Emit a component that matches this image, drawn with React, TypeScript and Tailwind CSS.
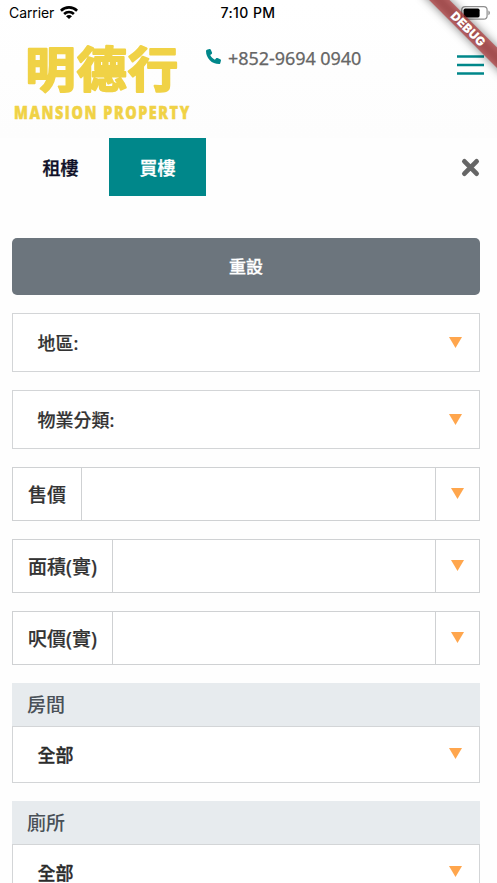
import type { ReactNode } from "react";
import { FaPhone } from "react-icons/fa6";

const FONT = "font-['Noto_Sans','Noto_Sans_CJK_TC',sans-serif]";

function StatusBar() {
  return (
    <div className="flex h-[26px] items-center px-[9px] font-['Inter',sans-serif] text-[14px] leading-none text-black">
      <div className="flex flex-1 items-center gap-[6px]">
        <span className="-tracking-[0.1px]">Carrier</span>
        <svg width="18" height="13" viewBox="0 0 18 13" fill="none" stroke="#000" strokeWidth="2.6" className="-mt-px">
          <path d="M.9 4.700C5.400 .3 12.600 .3 17.100 4.700" />
          <path d="M4.100 8C6.900 5.300 11.100 5.300 13.900 8" />
          <path d="M9 13 6 10.200C7.700 8.700 10.300 8.700 12 10.200Z" fill="#000" stroke="none" />
        </svg>
      </div>
      <span className="-ml-[1px] font-medium tracking-[0.4px]">7:10 PM</span>
      <div className="flex flex-1 justify-end">
        <svg width="30" height="14" viewBox="0 0 30 14" className="-mt-px -mr-[3px]">
          <rect x=".7" y=".7" width="25.4" height="12.4" rx="3.4" fill="none" stroke="#8e8e8e" strokeWidth="1.2" />
          <rect x="2.6" y="2.6" width="16" height="8.8" rx="1.6" fill="#000" />
          <path d="M27.4 4.6c2 .8 2 3.8 0 4.600Z" fill="#8e8e8e" />
        </svg>
      </div>
    </div>
  );
}

function DebugRibbon() {
  return (
    <svg className="pointer-events-none absolute top-0 right-0 z-10" width="97" height="97" viewBox="0 0 97 97">
      <defs>
        <filter id="ribbonShadow" x="-30%" y="-200%" width="160%" height="500%">
          <feGaussianBlur stdDeviation="4.7" />
        </filter>
      </defs>
      <g transform="translate(97 0) rotate(45)">
        <rect x="-60" y="33.6" width="120" height="14.4" fill="#000" fillOpacity=".5" filter="url(#ribbonShadow)" />
        <rect x="-60" y="33.6" width="120" height="14.4" fill="#b02a2c" fillOpacity=".63" />
        <text
          x="0"
          y="45.2"
          textAnchor="middle"
          textLength="43"
          fill="#fff"
          className="font-['Inter',sans-serif] text-[12.2px] font-black"
        >
          DEBUG
        </text>
      </g>
    </svg>
  );
}

function Logo() {
  return (
    <svg
      width="180"
      height="84"
      viewBox="0 0 180 84"
      fill="#f0d246"
      stroke="#f0d246"
      strokeLinejoin="round"
      className="overflow-visible"
    >
      <text
        transform="translate(14.5 48.5) scale(1 .95)"
        strokeWidth="2.2"
        textLength="152.5"
        className="font-['Noto_Sans_CJK_TC',sans-serif] text-[50px] leading-none font-bold"
      >
        明德行
      </text>
      <text
        transform="translate(3 81) scale(.8 1)"
        strokeWidth=".5"
        textLength="219"
        className="font-['Open_Sans',sans-serif] text-[18px] leading-none font-extrabold"
      >
        MANSION PROPERTY
      </text>
    </svg>
  );
}

function Header() {
  return (
    <header className="flex h-[112px] items-start pt-[12px] pr-[13px] pl-[11px]">
      <Logo />
      <div className="flex flex-1 items-center gap-[7px] pt-[6px] pl-[15px]">
        <FaPhone className="-mt-[4px] size-[15px] shrink-0 text-[#00878a]" />
        <span className="text-[18px] leading-[28px] tracking-[-0.06px] whitespace-nowrap text-[#666] [-webkit-text-stroke:0.25px]">
          +852-9694 0940
        </span>
      </div>
      <button className="mt-[17px]" aria-label="選單">
        <svg width="27" height="20" viewBox="0 0 27 20" stroke="#00878a" strokeWidth="2.3">
          <path d="M0 1.500H27M0 10H27M0 18.500H27" />
        </svg>
      </button>
    </header>
  );
}

function Tabs() {
  return (
    <div className="flex h-[57.5px] items-center pr-[17px] pl-[12px] text-[18px] font-medium [-webkit-text-stroke:0.35px]">
      <button className="h-full w-[97px] pt-[3px] text-[#101028]">租樓</button>
      <button className="h-full w-[97px] bg-[#00878a] pt-[3px] text-white">買樓</button>
      <button className="mt-[2px] ml-auto" aria-label="關閉">
        <svg width="19" height="19" viewBox="0 0 19 19" stroke="#666" strokeWidth="4.8" strokeLinecap="round">
          <path d="M3.400 3.400 15.600 15.600M15.600 3.400 3.400 15.600" />
        </svg>
      </button>
    </div>
  );
}

function Arrow() {
  return (
    <svg width="13" height="11" viewBox="0 0 13 11" fill="#ffa64d">
      <path d="M0 0H13L6.500 11Z" />
    </svg>
  );
}

function SelectBox({ children }: { children: ReactNode }) {
  return (
    <div className="flex h-[59px] items-center justify-between border border-[#d3d5d7] bg-white pr-[17px] pl-[24.5px] text-[18px] font-medium text-[#333] [-webkit-text-stroke:0.2px]">
      <span className="pt-[2px]">{children}</span>
      <Arrow />
    </div>
  );
}

function RangeInput({ label, width }: { label: string; width: string }) {
  return (
    <div className="flex h-[54px] border border-[#cfd1d3] bg-white text-[19px] font-medium text-[#333] [-webkit-text-stroke:0.2px]">
      <div className={`flex ${width} items-center border-r border-[#cfd1d3] pt-[2px] pl-[15px] whitespace-nowrap`}>
        {label}
      </div>
      <div className="flex-1" />
      <div className="flex w-[44px] items-center justify-center border-l border-[#cfd1d3] pb-[2px]">
        <Arrow />
      </div>
    </div>
  );
}

function Section({ title }: { title: string }) {
  return (
    <div className="-mt-[0.5px]">
      <div className="flex h-[43.5px] items-center bg-[#e7ebee] pt-[2px] pl-[15px] text-[19px] font-medium text-[#495057]">
        {title}
      </div>
      <div className="-mt-[0.5px] flex h-[57.5px] items-center justify-between border border-[#d3d5d7] bg-white pr-[17px] pl-[24.5px] text-[18px] leading-none font-medium text-[#2b2b2b] [-webkit-text-stroke:0.35px]">
        <span className="pt-[2px]">全部</span>
        <span className="pb-[2px]">
          <Arrow />
        </span>
      </div>
    </div>
  );
}

export default function App() {
  return (
    <div lang="zh-Hant" className={`relative h-[883px] w-full overflow-hidden bg-[#fefefe] ${FONT}`}>
      <DebugRibbon />
      <div className="bg-linear-to-b from-white to-[#fdfdfd]">
        <StatusBar />
        <Header />
      </div>
      <Tabs />
      <main className="flex flex-col gap-[18px] pt-[42px] pr-[17px] pl-[12px]">
        <button className="h-[57.5px] rounded-[5px] bg-[#6c757d] text-[17px] font-medium text-white [-webkit-text-stroke:0.3px]">
          重設
        </button>
        <SelectBox>地區:</SelectBox>
        <SelectBox>物業分類:</SelectBox>
        <RangeInput label="售價" width="w-[69px]" />
        <RangeInput label="面積(實)" width="w-[100px]" />
        <RangeInput label="呎價(實)" width="w-[100px]" />
        <Section title="房間" />
        <Section title="廁所" />
      </main>
    </div>
  );
}
